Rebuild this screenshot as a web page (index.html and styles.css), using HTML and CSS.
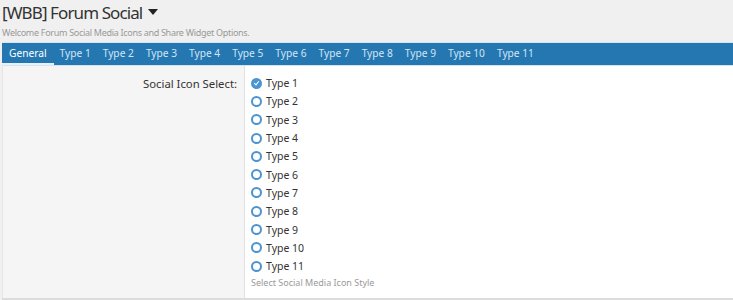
FILE: index.html
```html
<!DOCTYPE html>
<html lang="en">
<head>
  <meta charset="UTF-8" />
  <title>[WBB] Forum Social</title>
  <link rel="stylesheet" href="styles.css">
</head>
<body>
  <div class="page-head">
    <h1 class="title">[WBB] Forum Social <span class="caret"></span></h1>
    <div class="subtitle">Welcome Forum Social Media Icons and Share Widget Options.</div>
  </div>

  <div class="panel">
    <ul class="tabs">
      <li class="active">General</li>
      <li>Type 1</li>
      <li>Type 2</li>
      <li>Type 3</li>
      <li>Type 4</li>
      <li>Type 5</li>
      <li>Type 6</li>
      <li>Type 7</li>
      <li>Type 8</li>
      <li>Type 9</li>
      <li>Type 10</li>
      <li>Type 11</li>
    </ul>

    <div class="form-row">
      <div class="form-label">Social Icon Select:</div>
      <div class="form-field">
        <label class="radio checked"><span class="dot"></span>Type 1</label>
        <label class="radio"><span class="dot"></span>Type 2</label>
        <label class="radio"><span class="dot"></span>Type 3</label>
        <label class="radio"><span class="dot"></span>Type 4</label>
        <label class="radio"><span class="dot"></span>Type 5</label>
        <label class="radio"><span class="dot"></span>Type 6</label>
        <label class="radio"><span class="dot"></span>Type 7</label>
        <label class="radio"><span class="dot"></span>Type 8</label>
        <label class="radio"><span class="dot"></span>Type 9</label>
        <label class="radio"><span class="dot"></span>Type 10</label>
        <label class="radio"><span class="dot"></span>Type 11</label>
        <div class="hint">Select Social Media Icon Style</div>
      </div>
    </div>
  </div>
</body>
</html>
```

FILE: styles.css
```css
body {
  margin: 0;
  background: #f0f0f0;
  font-family: 'Noto Sans', 'Open Sans', sans-serif;
  color: #333;
}
.page-head {
  padding: 0 2px;
  height: 42px;
}
.title {
  margin: 0;
  padding-top: 1px;
  font-size: 17px;
  letter-spacing: -0.9px;
  font-weight: normal;
  line-height: 24px;
  color: #333;
}
.caret {
  display: inline-block;
  width: 0;
  height: 0;
  border-left: 5px solid transparent;
  border-right: 5px solid transparent;
  border-top: 6px solid #222;
  vertical-align: 4px;
  margin-left: 2px;
}
.subtitle {
  font-size: 9px;
  letter-spacing: -0.3px;
  color: #999;
  line-height: 14px;
  margin-top: 1px;
}
.panel {
  margin-left: 2px;
  border-bottom: 2px solid #dcdcdc;
}
.tabs {
  list-style: none;
  margin: 0;
  padding: 0;
  height: 22px;
  display: flex;
  background: #2577b1;
  border-top: 1px solid #d4e4f0;
  border-bottom: 1px solid #d4e4f0;
}
.tabs li {
  color: #d3e5f4;
  font-size: 10.2px;
  line-height: 21px;
  padding: 0 6px;
}
.tabs li.active {
  padding: 0 7px;
  color: #fff;
  border-bottom: 2px solid #e8f1f8;
}
.form-row {
  display: flex;
  min-height: 232px;
}
.form-label {
  width: 234px;
  background: #f5f5f5;
  text-align: right;
  padding: 10px 7px 0 0;
  font-size: 11.3px;
  line-height: 15px;
  color: #333;
  border-left: 1px solid #e6e6e6;
}
.form-field {
  flex: 1;
  background: #fff;
  border-left: 1px solid #e2e2e2;
  padding: 8px 0 0 6px;
}
.radio {
  display: flex;
  align-items: center;
  height: 18.3px;
  font-size: 10.5px;
  color: #333;
}
.dot {
  box-sizing: border-box;
  width: 11px;
  height: 11px;
  border: 2px solid #4c94d0;
  border-radius: 50%;
  margin-right: 4px;
  position: relative;
}
.radio.checked .dot {
  background: #4c94d0;
}
.radio.checked .dot::after {
  content: "";
  position: absolute;
  left: 2px;
  top: 0px;
  width: 2px;
  height: 4px;
  border-right: 1.5px solid #fff;
  border-bottom: 1.5px solid #fff;
  transform: rotate(40deg);
}
.hint {
  font-size: 9px;
  color: #9a9a9a;
  margin-top: 1px;
}
```
